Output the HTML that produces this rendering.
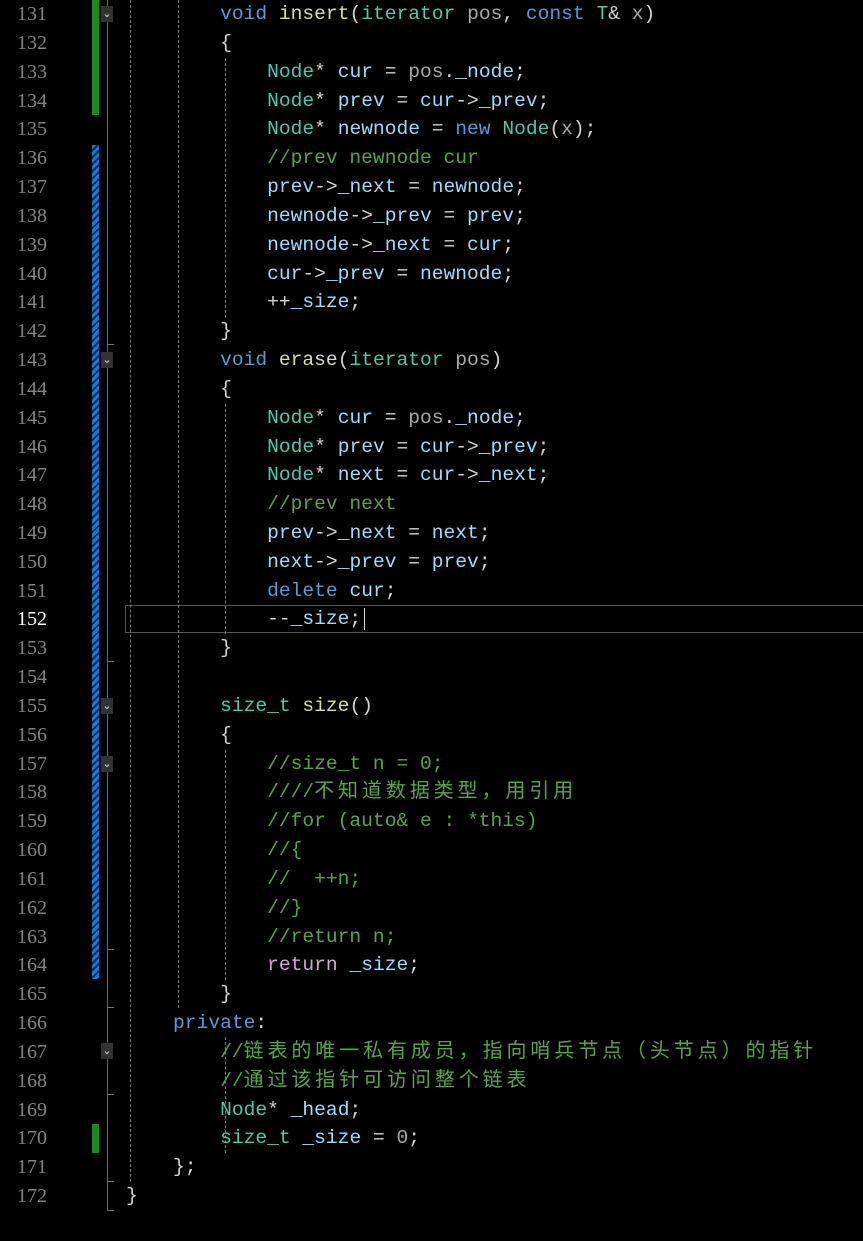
<!DOCTYPE html>
<html><head><meta charset="utf-8"><style>
html,body{margin:0;padding:0;background:#000;width:863px;height:1241px;overflow:hidden;position:relative}
.l{position:absolute;left:126px;height:29px;line-height:29px;font-family:"Liberation Mono","Noto Sans CJK SC",monospace;font-size:19.6px;white-space:pre;color:#d4d4d4}
.n{position:absolute;left:0;width:47px;text-align:right;color:#858585;font-family:"Liberation Serif","Liberation Mono",serif;font-size:20px;line-height:29px;height:29px}
.k{color:#569cd6}.t{color:#4ec9b0}.v{color:#9cdcfe}.m{color:#57a64a}.f{color:#dcdcaa}.g{color:#a8a8a8}
.z{font-family:"Noto Sans CJK SC",sans-serif;font-size:20px;letter-spacing:3.9px;line-height:0}
.gd{position:absolute;width:0;border-left:1px dashed #777}
.fb{position:absolute;left:101px;width:12px;height:16px;background:#333;color:#ddd;font-size:11px;line-height:16px;text-align:center;font-family:"DejaVu Sans",sans-serif}
.tk{position:absolute;left:107px;width:7px;height:1px;background:#777}
</style></head><body>
<div style="position:absolute;left:92px;top:0;width:7px;height:115px;background:#1e8a1e"></div>
<div style="position:absolute;left:92px;top:1124px;width:7px;height:29px;background:#1e8a1e"></div>
<div style="position:absolute;left:92px;top:145px;width:7px;height:834px;background:repeating-linear-gradient(135deg,#1a7ad8 0 3px,#0a2a5a 3px 5px)"></div>
<div style="position:absolute;left:107px;top:0;width:1px;height:1210px;background:#666"></div>
<div class="tk" style="top:1210px"></div><div class="tk" style="top:661px"></div><div class="tk" style="top:949px"></div><div class="tk" style="top:1007px"></div><div class="tk" style="top:1094px"></div><div class="tk" style="top:1181px"></div><div class="tk" style="top:344px"></div>
<div style="position:absolute;left:125px;top:605px;width:740px;height:26px;border:1px solid #555;border-right:none"></div>
<div class="gd" style="left:130px;top:0;height:1182px"></div>
<div class="gd" style="left:178px;top:0;height:1008px"></div>
<div class="gd" style="left:225px;top:58px;height:260px"></div>
<div class="gd" style="left:225px;top:404px;height:230px"></div>
<div class="gd" style="left:225px;top:750px;height:230px"></div>
<div class="gd" style="left:225px;top:1037px;height:116px"></div>
<div class="fb" style="top:6px">&#8964;</div><div class="fb" style="top:352px">&#8964;</div><div class="fb" style="top:698px">&#8964;</div><div class="fb" style="top:756px">&#8964;</div><div class="fb" style="top:1043px">&#8964;</div>
<div style="position:absolute;left:364px;top:608px;width:1px;height:22px;background:#ddd"></div>

<div class="n" style="top:0px">131</div><div class="l" style="top:0px">        <span class="k">void</span> <span class="f">insert</span>(<span class="t">iterator</span> <span class="g">pos</span>, <span class="k">const</span> <span class="t">T</span>&amp; <span class="g">x</span>)</div>
<div class="n" style="top:28.8px">132</div><div class="l" style="top:28.8px">        {</div>
<div class="n" style="top:57.7px">133</div><div class="l" style="top:57.7px">            <span class="t">Node</span>* <span class="v">cur</span> = <span class="g">pos</span>.<span class="v">_node</span>;</div>
<div class="n" style="top:86.5px">134</div><div class="l" style="top:86.5px">            <span class="t">Node</span>* <span class="v">prev</span> = <span class="v">cur</span>-&gt;<span class="v">_prev</span>;</div>
<div class="n" style="top:115.3px">135</div><div class="l" style="top:115.3px">            <span class="t">Node</span>* <span class="v">newnode</span> = <span class="k">new</span> <span class="t">Node</span>(<span class="g">x</span>);</div>
<div class="n" style="top:144.2px">136</div><div class="l" style="top:144.2px">            <span class="m">//prev newnode cur</span></div>
<div class="n" style="top:173px">137</div><div class="l" style="top:173px">            <span class="v">prev</span>-&gt;<span class="v">_next</span> = <span class="v">newnode</span>;</div>
<div class="n" style="top:201.8px">138</div><div class="l" style="top:201.8px">            <span class="v">newnode</span>-&gt;<span class="v">_prev</span> = <span class="v">prev</span>;</div>
<div class="n" style="top:230.6px">139</div><div class="l" style="top:230.6px">            <span class="v">newnode</span>-&gt;<span class="v">_next</span> = <span class="v">cur</span>;</div>
<div class="n" style="top:259.5px">140</div><div class="l" style="top:259.5px">            <span class="v">cur</span>-&gt;<span class="v">_prev</span> = <span class="v">newnode</span>;</div>
<div class="n" style="top:288.3px">141</div><div class="l" style="top:288.3px">            ++<span class="v">_size</span>;</div>
<div class="n" style="top:317.1px">142</div><div class="l" style="top:317.1px">        }</div>
<div class="n" style="top:346px">143</div><div class="l" style="top:346px">        <span class="k">void</span> <span class="f">erase</span>(<span class="t">iterator</span> <span class="g">pos</span>)</div>
<div class="n" style="top:374.8px">144</div><div class="l" style="top:374.8px">        {</div>
<div class="n" style="top:403.6px">145</div><div class="l" style="top:403.6px">            <span class="t">Node</span>* <span class="v">cur</span> = <span class="g">pos</span>.<span class="v">_node</span>;</div>
<div class="n" style="top:432.5px">146</div><div class="l" style="top:432.5px">            <span class="t">Node</span>* <span class="v">prev</span> = <span class="v">cur</span>-&gt;<span class="v">_prev</span>;</div>
<div class="n" style="top:461.3px">147</div><div class="l" style="top:461.3px">            <span class="t">Node</span>* <span class="v">next</span> = <span class="v">cur</span>-&gt;<span class="v">_next</span>;</div>
<div class="n" style="top:490.1px">148</div><div class="l" style="top:490.1px">            <span class="m">//prev next</span></div>
<div class="n" style="top:518.9px">149</div><div class="l" style="top:518.9px">            <span class="v">prev</span>-&gt;<span class="v">_next</span> = <span class="v">next</span>;</div>
<div class="n" style="top:547.8px">150</div><div class="l" style="top:547.8px">            <span class="v">next</span>-&gt;<span class="v">_prev</span> = <span class="v">prev</span>;</div>
<div class="n" style="top:576.6px">151</div><div class="l" style="top:576.6px">            <span class="k">delete</span> <span class="v">cur</span>;</div>
<div class="n" style="top:605.4px;color:#fff">152</div><div class="l" style="top:605.4px">            --<span class="v">_size</span>;</div>
<div class="n" style="top:634.3px">153</div><div class="l" style="top:634.3px">        }</div>
<div class="n" style="top:663.1px">154</div>
<div class="n" style="top:691.9px">155</div><div class="l" style="top:691.9px">        <span class="t">size_t</span> <span class="f">size</span>()</div>
<div class="n" style="top:720.8px">156</div><div class="l" style="top:720.8px">        {</div>
<div class="n" style="top:749.6px">157</div><div class="l" style="top:749.6px">            <span class="m">//size_t n = 0;</span></div>
<div class="n" style="top:778.4px">158</div><div class="l" style="top:778.4px">            <span class="m">////<span class="z">不知道数据类型，用引用</span></span></div>
<div class="n" style="top:807.2px">159</div><div class="l" style="top:807.2px">            <span class="m">//for (auto&amp; e : *this)</span></div>
<div class="n" style="top:836.1px">160</div><div class="l" style="top:836.1px">            <span class="m">//{</span></div>
<div class="n" style="top:864.9px">161</div><div class="l" style="top:864.9px">            <span class="m">//  ++n;</span></div>
<div class="n" style="top:893.7px">162</div><div class="l" style="top:893.7px">            <span class="m">//}</span></div>
<div class="n" style="top:922.6px">163</div><div class="l" style="top:922.6px">            <span class="m">//return n;</span></div>
<div class="n" style="top:951.4px">164</div><div class="l" style="top:951.4px">            <span style="color:#d8a0df">return</span> <span class="v">_size</span>;</div>
<div class="n" style="top:980.2px">165</div><div class="l" style="top:980.2px">        }</div>
<div class="n" style="top:1009.1px">166</div><div class="l" style="top:1009.1px">    <span class="k">private</span>:</div>
<div class="n" style="top:1037.9px">167</div><div class="l" style="top:1037.9px">        <span class="m">//<span class="z">链表的唯一私有成员，指向哨兵节点（头节点）的指针</span></span></div>
<div class="n" style="top:1066.7px">168</div><div class="l" style="top:1066.7px">        <span class="m">//<span class="z">通过该指针可访问整个链表</span></span></div>
<div class="n" style="top:1095.5px">169</div><div class="l" style="top:1095.5px">        <span class="t">Node</span>* <span class="v">_head</span>;</div>
<div class="n" style="top:1124.4px">170</div><div class="l" style="top:1124.4px">        <span class="t">size_t</span> <span class="v">_size</span> = <span class="g">0</span>;</div>
<div class="n" style="top:1153.2px">171</div><div class="l" style="top:1153.2px">    };</div>
<div class="n" style="top:1182px">172</div><div class="l" style="top:1182px">}</div>
</body></html>
